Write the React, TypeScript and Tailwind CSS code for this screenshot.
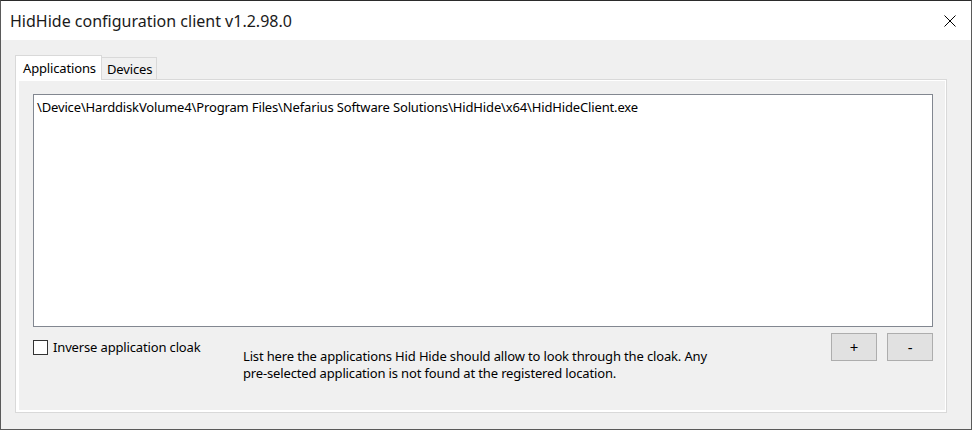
import React, { useState } from 'react';

const App: React.FC = () => {
  const [inverse, setInverse] = useState(false);
  const [tab, setTab] = useState<'apps' | 'devices'>('apps');

  return (
    <div className="w-[972px] h-[430px] border border-[#5a5a5a] border-t-[#2b2b2b] bg-[#f0f0f0] flex flex-col text-black font-['Noto_Sans',sans-serif] overflow-hidden">
      {/* title bar */}
      <div className="h-[39px] bg-white flex items-center justify-between pl-[9px] pr-[15px] shrink-0">
        <span className="text-[16px] leading-none text-[#1a1a1a]">HidHide configuration client v1.2.98.0</span>
        <svg width="12" height="12" viewBox="0 0 12 12" className="shrink-0">
          <path d="M0.5 0.5 L11.5 11.5 M11.5 0.5 L0.5 11.5" stroke="#000" strokeWidth="1" fill="none" />
        </svg>
      </div>

      <div className="flex-1 flex flex-col pl-[14px] pr-[24px] pt-[15px] pb-[16px] text-[13px] tracking-[-0.15px]">
        {/* tabs */}
        <div className="flex items-end h-[24px] relative z-10">
          <button
            onClick={() => setTab('apps')}
            className="w-[87px] h-[25px] -mb-px pl-[7px] border border-b-0 border-[#d9d9d9] bg-white leading-none flex items-start pt-[6px]"
          >
            Applications
          </button>
          <button
            onClick={() => setTab('devices')}
            className="w-[55px] h-[22px] pl-[5px] border border-l-0 border-b-0 border-[#d9d9d9] bg-[#f0f0f0] leading-none flex items-start pt-[5px]"
          >
            Devices
          </button>
        </div>

        {/* tab panel */}
        <div className="flex-1 border border-[#d9d9d9] bg-white pt-px pl-[3px] pr-px pb-[2px] flex">
          <div className="flex-1 bg-[#f0f0f0] flex flex-col pt-[13px] pl-[14px] pr-[12px]">
            <div className="h-[233px] bg-white border border-[#828790] px-[3px] pt-[3px] leading-[18px]">
              {tab === 'apps' && (
                <div>\Device\HarddiskVolume4\Program Files\Nefarius Software Solutions\HidHide\x64\HidHideClient.exe</div>
              )}
            </div>

            <div className="flex items-start">
              <label className="w-[210px] mt-[13px] flex items-center gap-[5px] leading-[16px] cursor-pointer">
                <span
                  onClick={() => setInverse(!inverse)}
                  className="w-[15px] h-[15px] border border-[#333] bg-white shrink-0 flex items-center justify-center"
                >
                  {inverse && (
                    <svg width="11" height="11" viewBox="0 0 11 11">
                      <path d="M1 5.5 L4 8.5 L10 2" stroke="#000" strokeWidth="1.3" fill="none" />
                    </svg>
                  )}
                </span>
                <span className="-mt-px">Inverse application cloak</span>
              </label>

              <p className="mt-[21px] leading-[17px]">
                List here the applications Hid Hide should allow to look through the cloak. Any
                <br />
                pre-selected application is not found at the registered location.
              </p>

              <div className="ml-auto mt-[6px] flex gap-[10px]">
                <button className="w-[46px] h-[28px] bg-[#e1e1e1] border border-[#adadad] text-[15px] leading-none">+</button>
                <button className="w-[46px] h-[28px] bg-[#e1e1e1] border border-[#adadad] text-[15px] leading-none">-</button>
              </div>
            </div>
          </div>
        </div>
      </div>
    </div>
  );
};

export default App;
